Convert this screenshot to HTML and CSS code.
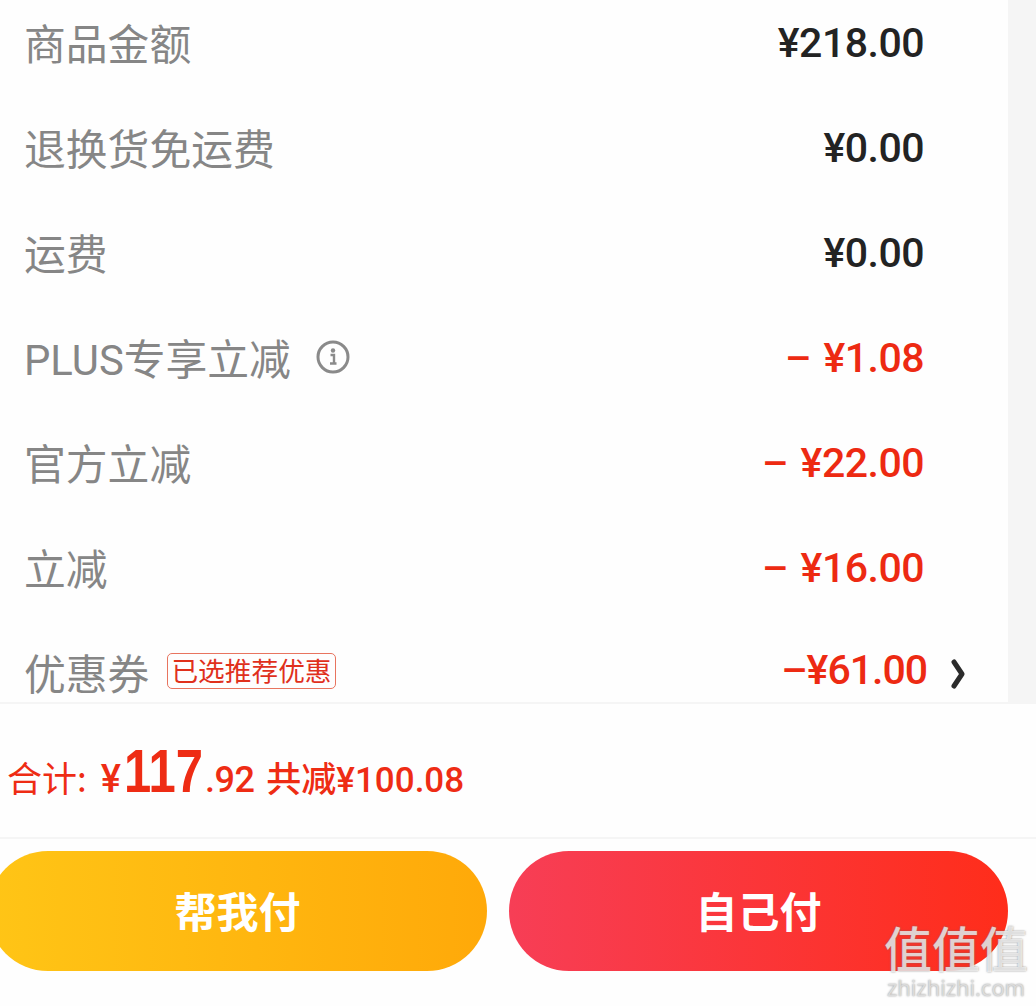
FILE: index.html
```html
<!DOCTYPE html>
<html lang="zh-CN">
  <head>
    <meta charset="UTF-8" />
    <meta name="viewport" content="width=device-width, initial-scale=1.0" />
    <title>订单结算</title>
    <link rel="stylesheet" href="styles.css">
  </head>
  <body>
    <div class="page">
      <div class="summary">
        <ul class="fees">
          <li class="fee">
            <span class="fee__label">商品金额</span>
            <span class="fee__value">¥218.00</span>
          </li>
          <li class="fee">
            <span class="fee__label">退换货免运费</span>
            <span class="fee__value">¥0.00</span>
          </li>
          <li class="fee">
            <span class="fee__label">运费</span>
            <span class="fee__value">¥0.00</span>
          </li>
          <li class="fee">
            <span class="fee__label">PLUS专享立减</span>
            <svg class="fee__info" viewBox="0 0 34 34">
              <circle cx="17" cy="17" r="15" fill="none" stroke="currentColor" stroke-width="3" />
              <circle cx="17" cy="10.500" r="2.200" fill="currentColor" />
              <path d="M14.500 15h3.500v8.500H20M14 23.500h6.500" fill="none" stroke="currentColor" stroke-width="2.400" />
            </svg>
            <span class="fee__value fee__value--off">–&nbsp;¥1.08</span>
          </li>
          <li class="fee">
            <span class="fee__label">官方立减</span>
            <span class="fee__value fee__value--off">–&nbsp;¥22.00</span>
          </li>
          <li class="fee">
            <span class="fee__label">立减</span>
            <span class="fee__value fee__value--off">–&nbsp;¥16.00</span>
          </li>
          <li class="fee fee--coupon">
            <span class="fee__label">优惠券</span>
            <span class="fee__tag">已选推荐优惠</span>
            <span class="fee__value fee__value--off fee__value--coupon">–¥61.00</span>
            <svg class="fee__arrow" viewBox="0 0 14 30">
              <path d="M3 3L11 15L3 27" fill="none" stroke="currentColor" stroke-width="5" stroke-linejoin="round" stroke-linecap="round" />
            </svg>
          </li>
        </ul>
      </div>

      <div class="total">
        <span class="total__label">合计:</span>
        <span class="total__yen">¥</span><span class="total__int">117</span><span class="total__dec">.92</span>
        <span class="total__saved">共减¥100.08</span>
      </div>

      <div class="actions">
        <button class="actions__btn actions__btn--friend">帮我付</button>
        <button class="actions__btn actions__btn--self">自己付</button>
      </div>

      <div class="mark">
        <div class="mark__logo">值值值</div>
        <div class="mark__url">zhizhizhi.com</div>
      </div>
    </div>
  </body>
</html>
```

FILE: styles.css
```css
* {
  box-sizing: border-box;
}

body {
  margin: 0;
  background: #fff;
  font-family: Roboto, "Noto Sans CJK SC", sans-serif;
}

.page {
  position: relative;
  width: 1036px;
  height: 1006px;
  overflow: hidden;
  background: #fefefe;
}

.summary {
  height: 704px;
  background: #f5f5f5;
  border-bottom: 2px solid #f5f5f5;
  overflow: hidden;
}

.fees {
  list-style: none;
  margin: -9px 0 0;
  padding: 0 85px 0 25px;
  width: 1008px;
  background: #fefefe;
}

.fee {
  display: flex;
  align-items: center;
  height: 105px;
}

.fee__label {
  margin: -4px 0 0 -1px;
  font-size: 41.800px;
  color: #868686;
}

.fee__info {
  width: 34px;
  height: 34px;
  margin: -4px 0 0 25px;
  color: #8a8a8a;
}

.fee__value {
  margin: -2px -1px 0 auto;
  font-size: 41px;
  font-weight: 500;
  letter-spacing: -0.500px;
  color: #232323;
}

.fee__value--off {
  word-spacing: 3px;
  color: #ed2a12;
}

.fee--coupon {
  position: relative;
}

.fee__value--coupon {
  margin: -8px -4px 0 auto;
  letter-spacing: -1px;
}

.fee__tag {
  margin: -6px 0 0 18px;
  padding: 0 3px;
  height: 36px;
  line-height: 32px;
  font-family: "Noto Sans CJK SC", sans-serif;
  font-size: 26.700px;
  color: #e0301c;
  border: 1px solid #e8745f;
  border-radius: 5px;
}

.fee__arrow {
  position: absolute;
  right: -42px;
  top: 38px;
  width: 14px;
  height: 30px;
  color: #2b2b2b;
}

.total {
  display: flex;
  align-items: baseline;
  height: 135px;
  padding: 31px 0 0 7px;
  color: #ee2c14;
  border-bottom: 2px solid #f5f5f5;
}

.total__label {
  font-family: "Noto Sans CJK SC", sans-serif;
  font-size: 35px;
  margin-right: 14px;
}

.total__yen {
  font-size: 38px;
  font-weight: 500;
  margin-right: 3px;
}

/* the reference's digits are much narrower than any installed bold */
.total__int {
  display: inline-block;
  width: 78px;
  font-family: "Liberation Sans", sans-serif;
  font-size: 62px;
  font-weight: 700;
  transform: scaleX(0.79);
  transform-origin: left;
}

.total__dec {
  font-size: 36px;
  font-weight: 500;
  letter-spacing: -0.500px;
  margin: 0 12px 0 3px;
}

.total__saved {
  font-size: 35px;
  font-weight: 500;
}

.actions {
  display: flex;
  gap: 22px;
  margin: 12px 0 0 -12px;
}

.actions__btn {
  flex: none;
  width: 499px;
  height: 120px;
  padding: 0 0 4px;
  border: none;
  border-radius: 60px;
  font-family: "Noto Sans CJK SC", sans-serif;
  font-size: 42px;
  font-weight: 700;
  color: #fff;
}

.actions__btn--friend {
  background: linear-gradient(90deg, #ffc516, #ffa909);
}

.actions__btn--self {
  background: linear-gradient(90deg, #f73e56, #ff2d1a);
}

.mark {
  position: absolute;
  right: 8px;
  bottom: 7px;
  text-align: center;
  color: rgba(255, 255, 255, 0.72);
  text-shadow: 0 0 2px rgba(110, 110, 110, 0.8);
}

.mark__logo {
  font-family: "Noto Sans CJK SC", sans-serif;
  font-size: 48px;
  font-weight: 500;
  line-height: 48px;
  margin-bottom: 5px;
}

.mark__url {
  font-family: "Open Sans", sans-serif;
  font-size: 22px;
  line-height: 24px;
  color: rgba(225, 225, 225, 0.9);
}
```
